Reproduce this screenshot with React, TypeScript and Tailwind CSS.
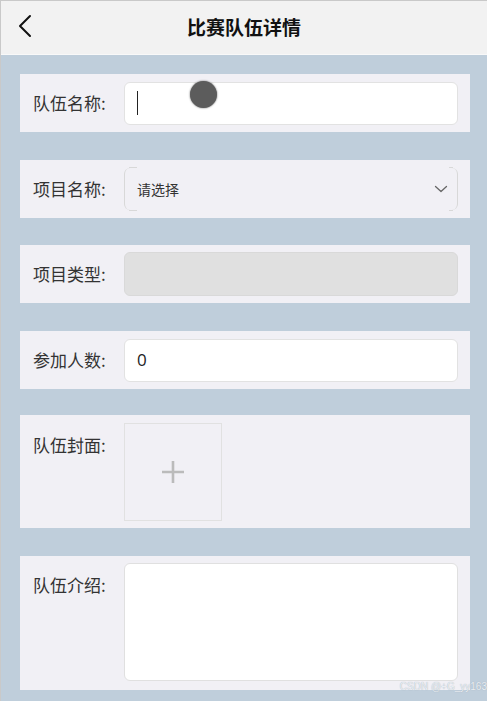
import React from 'react';

const font = { fontFamily: '"Noto Sans CJK SC", "Noto Sans", sans-serif' };

const Row: React.FC<{ label: string; top?: boolean; children: React.ReactNode; className?: string }> = ({ label, top, children, className }) => (
    <div className={`flex bg-[#f1f0f5] pl-[13px] pr-[12px] ${top ? 'items-start' : 'items-center'} ${className ?? ''}`}>
        <span className={`w-[91px] shrink-0 text-[17px] text-[#333] ${top ? 'mt-[9px]' : ''}`}>{label}</span>
        {children}
    </div>
);

export default function App() {
    return (
        <div className="relative w-[490px] h-[701px] overflow-hidden bg-white" style={font}>
            <div className="flex flex-col h-full border-l border-t border-[#c9c9c9] mr-[3px]">
                {/* Header */}
                <div className="relative h-[54px] shrink-0 bg-[#f2f2f2] border-b border-[#f9f9f9] flex items-center justify-center">
                    <svg className="absolute left-[16px] top-[13px]" width="18" height="24" viewBox="0 0 18 24" fill="none">
                        <path d="M13 2L3 12L13 22" stroke="#111" strokeWidth="2" strokeLinecap="round" strokeLinejoin="round" />
                    </svg>
                    <span className="text-[19px] font-bold text-[#111]">比赛队伍详情</span>
                </div>

                {/* Form */}
                <div className="flex-1 bg-[#bfcedb] pl-[19px] pr-[17px] pt-[19px] flex flex-col">
                    <Row label="队伍名称:" className="h-[58px]">
                        <div className="flex-1 h-[43px] bg-white rounded-md border border-[#e2e2e2] flex items-center pl-[12px]">
                            <span className="w-px h-[24px] bg-[#222]" />
                        </div>
                    </Row>

                    <Row label="项目名称:" className="h-[58px] mt-[28px]">
                        <div className="relative flex-1 h-[42px] rounded-md border-x border-[#d8d8d8] flex items-center justify-between pl-[12px] pr-[9px]">
                            <span className="absolute left-[4px] top-[-1px] w-[8px] border-t border-[#d8d8d8]" />
                            <span className="absolute left-[4px] bottom-[-1px] w-[8px] border-b border-[#d8d8d8]" />
                            <span className="absolute right-[4px] top-[-1px] w-[4px] border-t border-[#d8d8d8]" />
                            <span className="absolute right-[4px] bottom-[-1px] w-[4px] border-b border-[#d8d8d8]" />
                            <span className="text-[14px] text-[#333]">请选择</span>
                            <svg width="14" height="10" viewBox="0 0 14 10" fill="none">
                                <path d="M1.5 2.5L7 7.5L12.5 2.5" stroke="#666" strokeWidth="1.3" strokeLinecap="round" strokeLinejoin="round" />
                            </svg>
                        </div>
                    </Row>

                    <Row label="项目类型:" className="h-[58px] mt-[27px]">
                        <div className="flex-1 h-[44px] bg-[#e0e0e0] rounded-md border border-[#d9d9d9]" />
                    </Row>

                    <Row label="参加人数:" className="h-[58px] mt-[28px]">
                        <div className="flex-1 h-[43px] bg-white rounded-md border border-[#e2e2e2] flex items-center pl-[12px]">
                            <span className="text-[17px] text-[#222]" style={{ fontFamily: '"Open Sans", sans-serif' }}>0</span>
                        </div>
                    </Row>

                    <Row label="队伍封面:" top className="h-[113px] pt-[8px] mt-[26px]">
                        <div className="w-[98px] h-[98px] border border-[#e1e1e1] flex items-center justify-center">
                            <svg width="24" height="24" viewBox="0 0 24 24" fill="none">
                                <path d="M12 1V23M1 12H23" stroke="#bbb" strokeWidth="2.6" />
                            </svg>
                        </div>
                    </Row>

                    <Row label="队伍介绍:" top className="h-[134px] pt-[7px] mt-[28px]">
                        <div className="flex-1 h-[118px] bg-white rounded-md border border-[#e0e0e0]" />
                    </Row>
                </div>
            </div>

            {/* touch indicator */}
            <div className="absolute left-[190px] top-[81px] w-[27px] h-[27px] rounded-full bg-[#5c5c5c] shadow-[0_0_2px_#5c5c5c]" />

            {/* watermark */}
            <span className="absolute right-[3px] bottom-[7px] text-[10px] text-[#e9eef3] [text-shadow:0_0_1px_#9aa6b2]" style={{ fontFamily: '"Liberation Sans", sans-serif' }}>CSDN @+G_yy163</span>
        </div>
    );
}
